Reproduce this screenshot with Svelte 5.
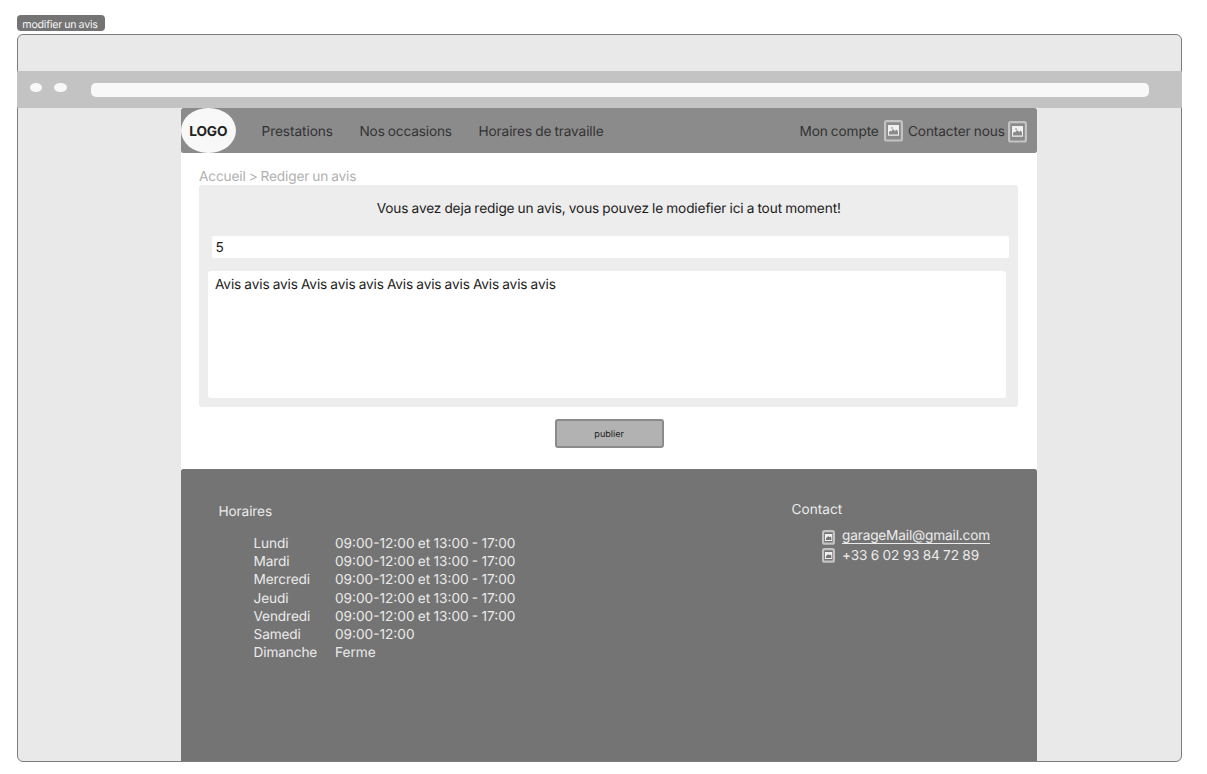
<script>
  const hours = [
    ['Lundi', '09:00-12:00 et 13:00 - 17:00'],
    ['Mardi', '09:00-12:00 et 13:00 - 17:00'],
    ['Mercredi', '09:00-12:00 et 13:00 - 17:00'],
    ['Jeudi', '09:00-12:00 et 13:00 - 17:00'],
    ['Vendredi', '09:00-12:00 et 13:00 - 17:00'],
    ['Samedi', '09:00-12:00'],
    ['Dimanche', 'Ferme']
  ];
</script>

{#snippet picture()}
  <svg class="pic" width="19" height="22" viewBox="0 0 19 22" aria-hidden="true">
    <rect x="1.1" y="1.1" width="16.8" height="19.4" rx="1.5" fill="#8b8b8b" stroke="#c3c3c3" stroke-width="2.2" />
    <path fill="#f0f0f0" fill-rule="evenodd" d="M4 5h11v10.8H4zM5 14.6h9v-3.2l-1.5-2-1.5 1.6-2-2.1-1.7 2.4-1-.5L5 12zM7.4 7.2v1.5h1.3V7.2z" />
  </svg>
{/snippet}

{#snippet smallPicture()}
  <svg class="pic" width="13" height="15" viewBox="0 0 13 15" aria-hidden="true">
    <rect x="1.1" y="1.1" width="10.8" height="12.6" rx="1.5" fill="#747474" stroke="#c3c3c3" stroke-width="2.2" />
    <path fill="#f0f0f0" fill-rule="evenodd" d="M3 4h7.2v7H3zM4 10h5.3V7.6L8.3 6.4l-.9.9-1.3-1.2L5 7.5l-1 .4z" />
  </svg>
{/snippet}

<div class="canvas">
  <div class="tag">modifier un avis</div>
  <div class="window">
    <div class="bar">
      <i class="dot"></i><i class="dot"></i>
      <div class="url"></div>
    </div>
    <div class="page">
      <header>
        <div class="logo">LOGO</div>
        <nav>
          <span class="n1">Prestations</span>
          <span class="n2">Nos occasions</span>
          <span class="n3">Horaires de travaille</span>
        </nav>
        <div class="account"><span>Mon compte</span>{@render picture()}</div>
        <div class="contact-link"><span>Contacter nous</span>{@render picture()}</div>
      </header>
      <main>
        <div class="crumb">Accueil &gt; Rediger un avis</div>
        <section>
          <p>Vous avez deja redige un avis, vous pouvez le modiefier ici a tout moment!</p>
          <div class="note">5</div>
          <div class="review">Avis avis avis Avis avis avis Avis avis avis Avis avis avis</div>
        </section>
        <button>publier</button>
      </main>
      <footer>
        <div class="hours">
          <div class="title">Horaires</div>
          <div class="table">
            {#each hours as [day, time]}
              <span>{day}</span><span class="time">{time}</span>
            {/each}
          </div>
        </div>
        <div class="contact">
          <div class="title">Contact</div>
          <div class="line mail">{@render smallPicture()}<span class="link">garageMail@gmail.com</span></div>
          <div class="line">{@render smallPicture()}<span class="phone">+33 6 02 93 84 72 89</span></div>
        </div>
      </footer>
    </div>
  </div>
</div>

<style>
  :global(body) { background: #fff; }
  .canvas {
    box-sizing: border-box;
    width: 1207px;
    height: 774px;
    padding: 15px 0 0 17px;
    overflow: hidden;
    font: 13.65px/18.2px Inter, sans-serif;
    letter-spacing: -0.12px;
    word-spacing: -0.55px;
    text-rendering: geometricPrecision;
    color: #1c1c1c;
    white-space: nowrap;
  }
  .tag {
    width: 88px;
    height: 16px;
    box-sizing: border-box;
    padding-left: 5.3px;
    border-radius: 4px;
    background: #747474;
    color: #f5f5f5;
    font-size: 10.6px;
    line-height: 19px;
    letter-spacing: -0.2px;
  }
  .window {
    box-sizing: border-box;
    width: 1165px;
    height: 728px;
    margin-top: 3px;
    border: 1px solid #7c7c7c;
    border-radius: 6px;
    background: #e9e9e9;
  }
  .bar {
    display: flex;
    box-sizing: border-box;
    height: 37.5px;
    margin: 35.7px -1px 0;
    padding: 12px 0 0 12.5px;
    border-radius: 1px;
    background: #c3c3c3;
  }
  .dot {
    width: 12.7px;
    height: 9.2px;
    margin-right: 12px;
    border-radius: 50%;
    background: #f8f8f8;
  }
  .url {
    width: 1058px;
    height: 14px;
    margin-left: 12.5px;
    border-radius: 5px;
    background: #f8f8f8;
  }
  .page { width: 855.5px; height: 652.8px; margin-left: 163px; background: #fff; }
  header {
    display: flex;
    height: 45px;
    border-radius: 2.5px;
    background: #8b8b8b;
    color: #333;
  }
  .logo {
    width: 54.5px;
    height: 45px;
    border-radius: 50%;
    background: #f8f8f8;
    color: #222;
    font-weight: 700;
    line-height: 48px;
    text-align: center;
  }
  nav { display: flex; width: 564px; line-height: 48px; }
  .n1 { width: 98px; margin-left: 26px; letter-spacing: -0.07px; }
  .n2 { width: 119px; letter-spacing: -0.16px; }
  .account, .contact-link { display: flex; line-height: 48px; }
  .account { width: 108.5px; }
  .account span { width: 84.5px; }
  .contact-link span { width: 100px; }
  .account .pic { margin-top: 11.5px; }
  .contact-link .pic { margin-top: 12.5px; }
  .pic { flex: none; display: block; }
  main { height: 316px; padding-left: 18px; overflow: hidden; }
  .crumb { padding-top: 15px; height: 17px; color: #b0b0b0; letter-spacing: -0.15px; word-spacing: -0.6px; }
  section {
    box-sizing: border-box;
    width: 818.5px;
    height: 222px;
    padding: 15px 9px 0;
    border-radius: 3px;
    background: #ededed;
  }
  p { margin: 0; padding-left: 1px; text-align: center; }
  .note, .review { box-sizing: border-box; width: 797.5px; background: #fff; }
  .note {
    height: 21.7px;
    margin: 17.5px 0 0 3.5px;
    padding-left: 4px;
    border-radius: 2px;
    line-height: 24.5px;
  }
  .review {
    height: 127.5px;
    margin-top: 13.3px;
    padding: 5px 0 0 7px;
    border-radius: 3px;
  }
  button {
    display: block;
    box-sizing: border-box;
    width: 109px;
    height: 29px;
    margin: 12.3px 0 0 355.7px;
    padding: 2px 0 0;
    border: 2px solid #8b8b8b;
    border-radius: 3px;
    background: #b2b2b2;
    color: #1c1c1c;
    font: 9.1px/23px Inter, sans-serif;
    text-rendering: geometricPrecision;
  }
  footer {
    display: flex;
    height: 291.8px;
    border-radius: 2.5px 2.5px 0 0;
    background: #747474;
    color: #ebebeb;
  }
  .hours { width: 573px; padding: 34px 0 0 37.5px; }
  .table {
    display: grid;
    grid-template-columns: 81.5px auto;
    grid-auto-rows: 18.15px;
    margin: 13.7px 0 0 35px;
  }
  .time { letter-spacing: 0; }
  .contact { padding-top: 31.6px; }
  .contact .title { letter-spacing: 0; }
  .line { display: flex; align-items: center; gap: 7.5px; margin-left: 30px; height: 18px; }
  .mail { margin-top: 9.4px; }
  .mail .pic { margin-top: 1px; }
  .link { height: 15px; line-height: 16.5px; border-bottom: 1px solid #ebebeb; margin-top: -2px; letter-spacing: -0.17px; }
  .phone { word-spacing: -0.3px; line-height: 20px; padding-top: 2px; }
</style>
